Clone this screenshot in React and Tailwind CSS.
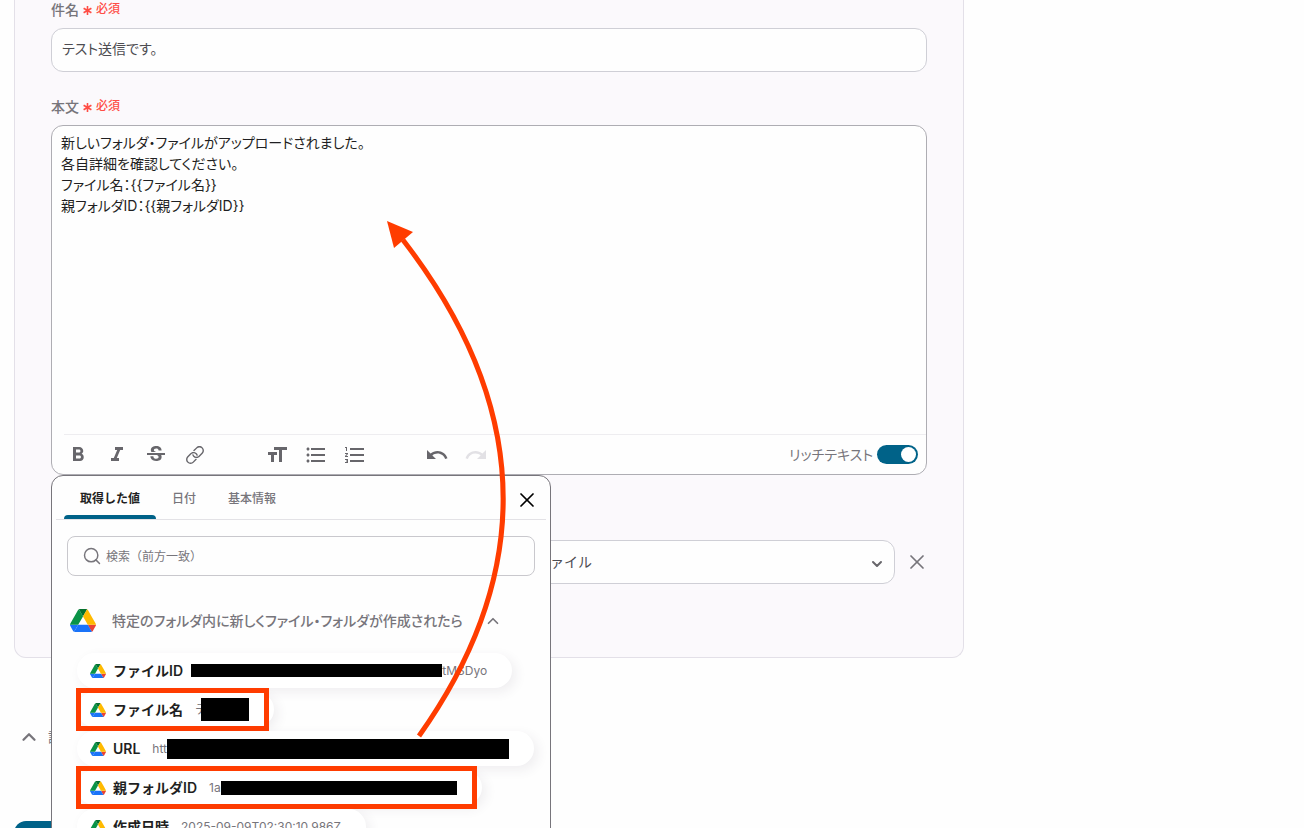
import React, { useState } from 'react';
import { ChevronDown, ChevronUp, Search, X } from 'lucide-react';
import {
  MdFormatBold,
  MdFormatItalic,
  MdFormatListBulleted,
  MdFormatListNumbered,
  MdFormatSize,
  MdRedo,
  MdStrikethroughS,
  MdUndo,
} from 'react-icons/md';
import { IoIosLink } from 'react-icons/io';

const BODY = `新しいフォルダ・ファイルがアップロードされました。
各自詳細を確認してください。
ファイル名：{{ファイル名}}
親フォルダID：{{親フォルダID}}`;

const TABS = ['取得した値', '日付', '基本情報'];

const OUTPUTS = [
  { name: 'ファイルID', gap: 'ml-2', bar: 'h-[13px] w-[251px] -mr-1', after: '/tMSDyo' },
  { name: 'ファイル名', gap: 'ml-3', before: 'テ', bar: 'h-[23px] w-12 -ml-1.5', frame: 'w-[193px]' },
  { name: 'URL', gap: 'ml-3', before: 'htt', bar: 'h-5 w-[342px]' },
  { name: '親フォルダID', gap: 'ml-3', before: '1a', bar: 'h-3.5 w-[236px]', frame: 'w-[401px]' },
  { name: '作成日時', gap: 'ml-3', before: '2025-09-09T02:30:10.986Z' },
];

const DriveLogo = ({ className }) => (
  <svg viewBox="0 0 87.3 78" className={className} aria-hidden="true">
    <path fill="#1a73f8" d="m6.6 66.85 3.85 6.65c.8 1.4 1.95 2.5 3.3 3.3l13.75-23.8h-27.5c0 1.55.4 3.1 1.2 4.5z" />
    <path fill="#0a9347" d="m43.65 25-13.75-23.8c-1.35.8-2.5 1.9-3.3 3.3l-25.4 44a9.06 9.06 0 0 0 -1.2 4.5h27.5z" />
    <path fill="#ea4335" d="m73.55 76.8c1.35-.8 2.5-1.9 3.3-3.3l1.6-2.75 7.65-13.25c.8-1.4 1.2-2.95 1.2-4.5h-27.502l5.852 11.5z" />
    <path fill="#05702f" d="m43.65 25 13.75-23.8c-1.35-.8-2.9-1.2-4.5-1.2h-18.5c-1.6 0-3.15.45-4.5 1.2z" />
    <path fill="#1a73f8" d="m59.8 53h-32.3l-13.75 23.8c1.35.8 2.9 1.2 4.5 1.2h50.8c1.6 0 3.15-.45 4.5-1.2z" />
    <path fill="#ffba00" d="m73.4 26.5-12.7-22c-.8-1.4-1.95-2.5-3.3-3.3l-13.75 23.8 16.15 28h27.45c0-1.55-.4-3.1-1.2-4.5z" />
  </svg>
);

const FieldLabel = ({ htmlFor, children }) => (
  <label htmlFor={htmlFor} className="mb-2 flex h-5 items-center gap-1 text-sm font-medium text-[#77757b]">
    {children}
    <span className="flex items-center gap-1 pb-0.5 text-xs text-[#ff4d45]">
      <svg viewBox="0 0 9 9" className="mt-0.5 size-[9px]" stroke="currentColor" strokeWidth="1.6">
        <path d="M4.5 0v9M.6 2.2l7.8 4.6M8.4 2.2l-7.8 4.6" />
      </svg>
      必須
    </span>
  </label>
);

const ToolButton = ({ label, icon: Icon, size = 24, className = 'text-[#67666b]' }) => (
  <button type="button" aria-label={label} className={`flex w-[39px] items-center justify-center ${className}`}>
    <Icon size={size} />
  </button>
);

const Editor = () => {
  const [rich, setRich] = useState(true);

  return (
    <div className="rounded-xl border border-[#aeadb3] bg-[#fefefe]">
      <textarea
        id="body"
        defaultValue={BODY}
        className="block h-[308px] w-full resize-none bg-transparent px-[9px] pt-1.5 text-sm leading-[21px] text-[#1f1f22] outline-none"
      />
      <div className="ml-3 flex h-10 items-center border-t border-[#eeedf0] pr-2">
        <div className="-ml-1.5 flex">
          <ToolButton label="太字" icon={MdFormatBold} />
          <ToolButton label="斜体" icon={MdFormatItalic} />
          <ToolButton label="取り消し線" icon={MdStrikethroughS} />
          <ToolButton label="リンク" icon={IoIosLink} size={22} />
        </div>
        <div className="ml-[43px] flex">
          <ToolButton label="文字サイズ" icon={MdFormatSize} />
          <ToolButton label="箇条書き" icon={MdFormatListBulleted} />
          <ToolButton label="番号付きリスト" icon={MdFormatListNumbered} />
        </div>
        <div className="ml-[43px] flex">
          <ToolButton label="元に戻す" icon={MdUndo} />
          <ToolButton label="やり直す" icon={MdRedo} className="text-[#e2e1e5]" />
        </div>
        <label className="ml-auto flex items-center gap-1 text-sm text-[#77757b]">
          リッチテキスト
          <input
            type="checkbox"
            role="switch"
            checked={rich}
            onChange={(e) => setRich(e.target.checked)}
            className="peer sr-only"
          />
          <span className="flex h-[19px] w-[41px] items-center rounded-full bg-gray-300 px-0.5 peer-checked:justify-end peer-checked:bg-[#006288]">
            <span className="size-[15px] rounded-full bg-white" />
          </span>
        </label>
      </div>
    </div>
  );
};

const OutputItem = ({ name, gap, before, bar, after, frame }) => (
  <li className="relative">
    <button
      type="button"
      className="flex h-[35px] items-center rounded-full bg-white pr-[25px] pl-[13px] shadow-[4px_4px_12px_rgba(60,50,80,0.08)]"
    >
      <DriveLogo className="mr-[7px] w-4" />
      <span className="text-sm font-semibold text-[#1f1f22]">{name}</span>
      <span className={`flex items-center text-xs text-[#77757b] ${gap}`}>
        {before}
        {bar && <span className={`relative bg-black ${bar}`} />}
        {after}
      </span>
    </button>
    {frame && <span className={`pointer-events-none absolute -inset-y-1 -left-px border-5 border-[#ff3c00] ${frame}`} />}
  </li>
);

const OutputPicker = () => {
  const [tab, setTab] = useState(TABS[0]);

  return (
    <div className="absolute top-full left-0 z-10 w-[500px] rounded-xl border border-[#77757b] bg-[#fefefe] pb-4 [font-feature-settings:normal]">
      <div className="mx-1 flex h-11 items-stretch border-b border-[#e3e2e6] pl-2">
        {TABS.map((t) => (
          <button
            key={t}
            type="button"
            onClick={() => setTab(t)}
            className={`relative px-4 pt-0.5 text-xs ${t === tab ? 'font-semibold text-[#1f1f22]' : 'font-medium text-[#77757b]'}`}
          >
            {t}
            {t === tab && <span className="absolute inset-x-0 bottom-0 h-1 rounded-t bg-[#006288]" />}
          </button>
        ))}
        <button type="button" aria-label="閉じる" className="mt-1 mr-[7px] ml-auto text-black">
          <X size={24} strokeWidth={1.75} />
        </button>
      </div>

      <div className="px-[15px] pt-4">
        <label className="flex h-10 items-center gap-1 rounded-lg border border-[#c9c8cd] px-3.5">
          <Search size={20} strokeWidth={1.75} className="shrink-0 text-[#77757b]" />
          <input
            aria-label="検索"
            placeholder="検索（前方一致）"
            className="w-full bg-transparent pt-0.5 text-xs outline-none placeholder:text-[#77757b]"
          />
        </label>

        <button
          type="button"
          className="mt-[33px] flex items-center pl-[3px] text-sm font-medium text-[#77757b] [font-feature-settings:'palt']"
        >
          <DriveLogo className="mr-4 w-[26px]" />
          特定のフォルダ内に新しくファイル・フォルダが作成されたら
          <ChevronUp size={18} strokeWidth={2.25} className="ml-[21px]" />
        </button>

        <ul className="mt-[21px] flex flex-col items-start gap-1 pl-2.5">
          {OUTPUTS.map((o) => (
            <OutputItem key={o.name} {...o} />
          ))}
        </ul>
      </div>
    </div>
  );
};

const App = () => (
  <main className="relative h-screen overflow-hidden bg-[#fefefe] pl-3.5 font-[Inter,'Noto_Sans_CJK_JP',sans-serif] [font-feature-settings:'palt']">
    <section className="max-w-[950px] rounded-b-xl border border-t-0 border-[#e3e0e8] bg-[#fbf9fc] px-9 pb-[73px]">
      <FieldLabel htmlFor="subject">件名</FieldLabel>
      <input
        id="subject"
        defaultValue="テスト送信です。"
        className="h-11 w-full rounded-xl border border-[#cfcfd6] bg-[#fefefe] px-2.5 pb-1 text-sm text-[#4d4c51] outline-none"
      />

      <div className="relative mt-[25px]">
        <FieldLabel htmlFor="body">本文</FieldLabel>
        <Editor />
        <OutputPicker />
      </div>

      <div className="mt-[65px] flex items-center">
        <div className="relative ml-auto w-[372px]">
          <select
            aria-label="添付ファイル"
            className="h-11 w-full appearance-none rounded-xl border border-[#cfcfd6] bg-[#fefefe] pl-3 text-sm text-[#4d4c51] outline-none [font-feature-settings:normal]"
          >
            <option>ファイル</option>
          </select>
          <ChevronDown size={16} strokeWidth={3} className="pointer-events-none absolute top-4 right-2.5 text-[#67666b]" />
        </div>
        <button type="button" aria-label="削除" className="-mr-0.5 ml-2.5 text-[#77757b]">
          <X size={24} strokeWidth={1.75} />
        </button>
      </div>
    </section>

    <button type="button" className="mt-[68px] ml-1 flex items-center gap-2 text-sm text-[#77757b]">
      <ChevronUp size={22} strokeWidth={2.5} />
      詳細設定
    </button>

    <button type="button" className="mt-[73px] block h-11 w-40 rounded-xl bg-[#006288] text-sm font-medium text-white">
      保存する
    </button>

    <svg
      viewBox="0 0 140 540"
      className="pointer-events-none absolute top-[210px] left-[380px] z-20 w-[140px]"
      aria-hidden="true"
    >
      <path d="M23 30Q215 278 39 526" fill="none" stroke="#ff3c00" strokeWidth="5" />
      <path d="M7 11l26 11-19 16z" fill="#ff3c00" />
    </svg>
  </main>
);

export default App;
